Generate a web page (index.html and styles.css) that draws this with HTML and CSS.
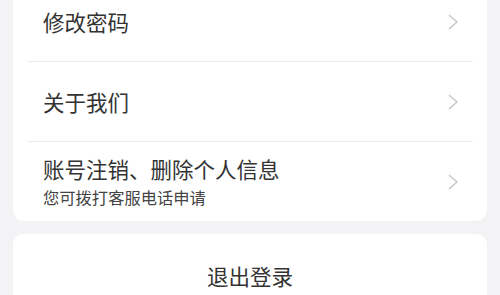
FILE: index.html
```html
<!DOCTYPE html>
<html>
<head>
<meta charset="utf-8">
<link rel="stylesheet" href="styles.css">
</head>
<body>
<div class="page">
  <div class="card list">
    <div class="row">
      <div class="texts"><div class="title">修改密码</div></div>
      <svg class="chev" viewBox="0 0 10 16"><path d="M1 1 L9 8 L1 15" /></svg>
    </div>
    <div class="row">
      <div class="texts"><div class="title">关于我们</div></div>
      <svg class="chev" viewBox="0 0 10 16"><path d="M1 1 L9 8 L1 15" /></svg>
    </div>
    <div class="row last">
      <div class="texts">
        <div class="title">账号注销、删除个人信息</div>
        <div class="sub">您可拨打客服电话申请</div>
      </div>
      <svg class="chev" viewBox="0 0 10 16"><path d="M1 1 L9 8 L1 15" /></svg>
    </div>
  </div>
  <div class="card logout">退出登录</div>
</div>
</body>
</html>
```
FILE: styles.css
```css
html, body {
  margin: 0;
  padding: 0;
  background: #f3f3f6;
  font-family: "Noto Sans CJK SC", "Noto Sans", sans-serif;
  overflow: hidden;
}
.page {
  padding: 0 13px;
  margin-top: -18px;
  display: flex;
  flex-direction: column;
  gap: 13px;
}
.card {
  background: #fff;
  border-radius: 11px;
}
.list {
  padding: 0 14px;
}
.row {
  height: 79px;
  display: flex;
  align-items: center;
  justify-content: space-between;
  border-bottom: 1px solid #ececee;
  padding: 0 15px 0 16px;
}
.row.last {
  border-bottom: none;
}
.texts {
  display: flex;
  flex-direction: column;
}
.title {
  font-size: 21.5px;
  color: #333;
  line-height: 28px;
}
.sub {
  font-size: 16.3px;
  color: #444;
  line-height: 22px;
  margin-top: 3px;
}
.chev {
  width: 10px;
  height: 16px;
  fill: none;
  stroke: #c4c4c6;
  stroke-width: 1.3;
}
.logout {
  height: 82px;
  display: flex;
  align-items: center;
  justify-content: center;
  font-size: 21.5px;
  color: #333;
}
```
